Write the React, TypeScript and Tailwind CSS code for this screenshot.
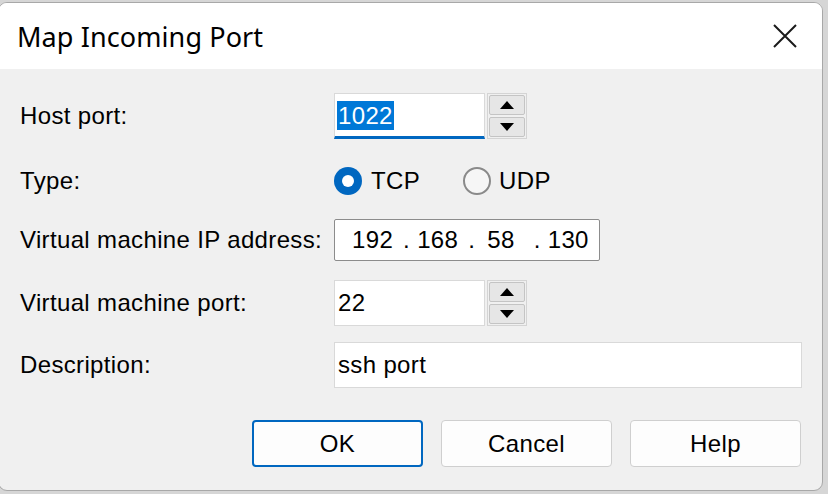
import React from "react";

const labelFont = { fontFamily: '"Liberation Sans", Arial, sans-serif' };

function Spin() {
  return (
    <div className="ml-[2px] flex h-[46px] w-[40px] flex-col gap-[2px] border border-[#d4d4d4] bg-[#f0f0f0] p-[1px]">
      <div className="flex flex-1 items-center justify-center rounded-[2px] border border-[#c4c4c4] bg-[#e6e6e6]">
        <svg width="14" height="8" viewBox="0 0 14 8"><path d="M7 0 L14 8 L0 8 Z" fill="#000" /></svg>
      </div>
      <div className="flex flex-1 items-center justify-center rounded-[2px] border border-[#c4c4c4] bg-[#e6e6e6]">
        <svg width="14" height="8" viewBox="0 0 14 8"><path d="M0 0 L14 0 L7 8 Z" fill="#000" /></svg>
      </div>
    </div>
  );
}

function Radio({ checked }: { checked: boolean }) {
  return checked ? (
    <div className="flex h-[28px] w-[28px] items-center justify-center rounded-full bg-[#0067c0]">
      <div className="h-[12px] w-[12px] rounded-full bg-white" />
    </div>
  ) : (
    <div className="h-[28px] w-[28px] rounded-full border-[2px] border-[#8a8a8a] bg-[#f6f6f6]" />
  );
}

export default function App() {
  return (
    <div className="h-[494px] w-[828px] overflow-hidden bg-[#d6d6d6]">
      <div className="ml-[-2px] mt-[2px] flex h-[489px] w-[825px] flex-col overflow-hidden rounded-[9px] border border-[#a8a8a8] bg-[#f0f0f0] text-[24px] tracking-[0.35px] text-black" style={labelFont}>
        <div className="flex h-[66px] shrink-0 items-center justify-between bg-white pl-[18px] pr-[24px]">
          <span className="text-[27px] leading-none tracking-[0.1px] text-black" style={{ fontFamily: '"Noto Sans", "Open Sans", sans-serif' }}>Map Incoming Port</span>
          <svg width="26" height="26" viewBox="0 0 26 26"><path d="M2 2 L24 24 M24 2 L2 24" stroke="#1a1a1a" strokeWidth="2" /></svg>
        </div>
        <div className="flex flex-col pl-[21px]">
          <div className="mt-[24px] flex h-[46px] items-center">
            <div className="w-[314px]">Host port:</div>
            <div className="flex items-center">
              <div className="flex h-[46px] w-[151px] items-center border-x border-t border-[#d9d9d9] border-b-[3px] border-b-[#0067c0] bg-white pl-[2px]">
                <span className="bg-[#0078d7] px-[1px] leading-[29px] text-white">1022</span>
              </div>
              <Spin />
            </div>
          </div>
          <div className="mt-[27px] flex h-[30px] items-center">
            <div className="w-[314px]">Type:</div>
            <div className="flex items-center">
              <Radio checked />
              <span className="ml-[9px]">TCP</span>
              <div className="ml-[43px]"><Radio checked={false} /></div>
              <span className="ml-[8px]">UDP</span>
            </div>
          </div>
          <div className="mt-[23px] flex h-[42px] items-center">
            <div className="w-[314px]">Virtual machine IP address:</div>
            <div className="flex h-[42px] w-[266px] items-center rounded-[2px] border border-[#8c8c8c] bg-white pl-[17px]">
              <span>192</span>
              <span className="ml-[10px]">.</span>
              <span className="ml-[7px]">168</span>
              <span className="ml-[10px]">.</span>
              <span className="ml-[12px]">58</span>
              <span className="ml-[19px]">.</span>
              <span className="ml-[7px]">130</span>
            </div>
          </div>
          <div className="mt-[19px] flex h-[46px] items-center">
            <div className="w-[314px]">Virtual machine port:</div>
            <div className="flex items-center">
              <div className="flex h-[46px] w-[151px] items-center border border-[#d9d9d9] bg-white pl-[3px]">22</div>
              <Spin />
            </div>
          </div>
          <div className="mt-[16px] flex h-[46px] items-center">
            <div className="w-[314px]">Description:</div>
            <div className="flex h-[46px] w-[468px] items-center border border-[#d9d9d9] bg-white pl-[3px]">ssh port</div>
          </div>
          <div className="mt-[32px] flex justify-end gap-[18px] pr-[21px]">
            <button className="h-[47px] w-[171px] rounded-[4px] border-[2px] border-[#0067c0] bg-[#fdfdfd]">OK</button>
            <button className="h-[47px] w-[171px] rounded-[4px] border border-[#cfcfcf] bg-[#fdfdfd]">Cancel</button>
            <button className="h-[47px] w-[171px] rounded-[4px] border border-[#cfcfcf] bg-[#fdfdfd]">Help</button>
          </div>
        </div>
      </div>
    </div>
  );
}
